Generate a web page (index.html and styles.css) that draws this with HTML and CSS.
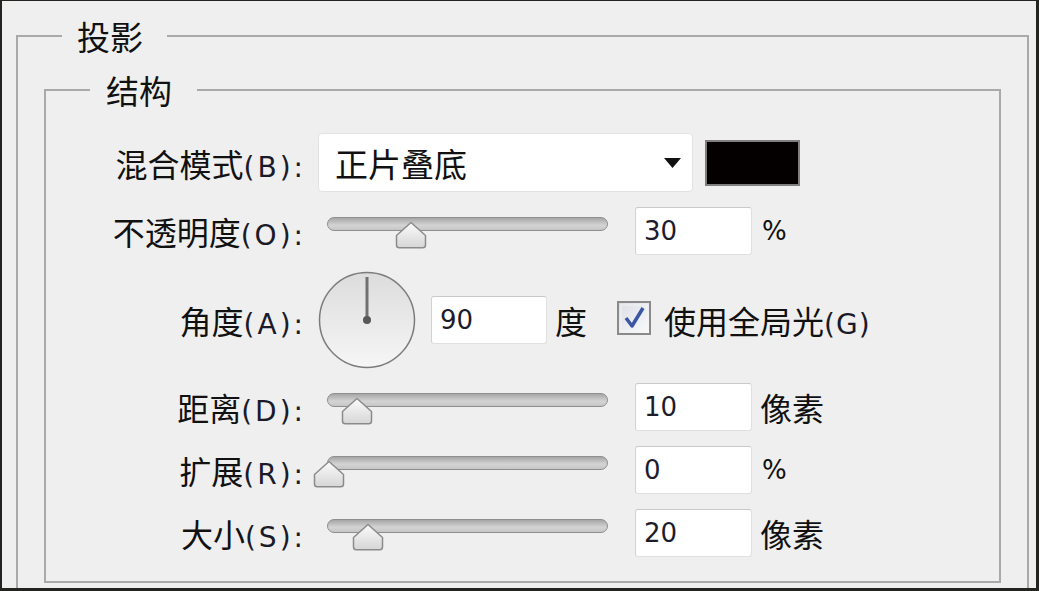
FILE: index.html
```html
<!DOCTYPE html>
<html lang="zh-CN">
<head>
    <meta charset="UTF-8">
    <meta name="viewport" content="width=device-width, initial-scale=1.0">
    <title>投影</title>
    <link rel="stylesheet" href="styles.css">
</head>
<body>
    <div class="window">
        <fieldset class="group outer">
            <legend>投影</legend>
            <fieldset class="group inner">
                <legend>结构</legend>

                <div class="row row-blend">
                    <label class="lbl">混合模式<span class="key">(B):</span></label>
                    <div class="select">
                        <span>正片叠底</span>
                        <svg class="caret" width="17" height="10" viewBox="0 0 17 10"><path d="M0 0H17L8.5 10Z" fill="#111"/></svg>
                    </div>
                    <div class="swatch"></div>
                </div>

                <div class="row">
                    <label class="lbl">不透明度<span class="key">(O):</span></label>
                    <div class="slider">
                        <div class="track"></div>
                        <svg class="thumb" style="left: 77px" width="32" height="28" viewBox="0 0 32 28"><use href="#thumb"/></svg>
                    </div>
                    <input class="num" type="text" value="30">
                    <span class="unit pct">%</span>
                </div>

                <div class="row row-angle">
                    <label class="lbl">角度<span class="key">(A):</span></label>
                    <svg class="dial" width="98" height="98" viewBox="0 0 98 98">
                        <defs>
                            <linearGradient id="dialFill" x1="0" y1="0" x2="0" y2="1">
                                <stop offset="0" stop-color="#dcdcdc"/>
                                <stop offset="1" stop-color="#f6f6f6"/>
                            </linearGradient>
                        </defs>
                        <circle cx="49" cy="49" r="47.5" fill="url(#dialFill)" stroke="#7c7c7c" stroke-width="1.5"/>
                        <line x1="49" y1="49" x2="49" y2="6" stroke="#707070" stroke-width="3"/>
                        <circle cx="49" cy="49" r="4" fill="#575757"/>
                    </svg>
                    <input class="num angle" type="text" value="90">
                    <span class="unit">度</span>
                    <svg class="check" width="34" height="34" viewBox="0 0 34 34">
                        <defs>
                            <linearGradient id="checkFill" x1="0" y1="0" x2="1" y2="1">
                                <stop offset="0" stop-color="#d9dde4"/>
                                <stop offset="1" stop-color="#fbfbfc"/>
                            </linearGradient>
                        </defs>
                        <rect x="1" y="1" width="32" height="32" fill="url(#checkFill)" stroke="#8a8a8a" stroke-width="2"/>
                        <rect x="4" y="4" width="26" height="26" fill="none" stroke="#f4f4f4" stroke-width="1"/>
                        <path d="M9 17L15 25L26 7" fill="none" stroke="#3b57a3" stroke-width="3.5" stroke-linejoin="round"/>
                    </svg>
                    <span class="check-text">使用全局光<span class="key">(G)</span></span>
                </div>

                <div class="row">
                    <label class="lbl">距离<span class="key">(D):</span></label>
                    <div class="slider">
                        <div class="track"></div>
                        <svg class="thumb" style="left: 23px" width="32" height="28" viewBox="0 0 32 28"><use href="#thumb"/></svg>
                    </div>
                    <input class="num" type="text" value="10">
                    <span class="unit">像素</span>
                </div>

                <div class="row">
                    <label class="lbl">扩展<span class="key">(R):</span></label>
                    <div class="slider">
                        <div class="track"></div>
                        <svg class="thumb" style="left: -5px" width="32" height="28" viewBox="0 0 32 28"><use href="#thumb"/></svg>
                    </div>
                    <input class="num" type="text" value="0">
                    <span class="unit pct">%</span>
                </div>

                <div class="row">
                    <label class="lbl">大小<span class="key">(S):</span></label>
                    <div class="slider">
                        <div class="track"></div>
                        <svg class="thumb" style="left: 34px" width="32" height="28" viewBox="0 0 32 28"><use href="#thumb"/></svg>
                    </div>
                    <input class="num" type="text" value="20">
                    <span class="unit">像素</span>
                </div>
            </fieldset>
        </fieldset>
    </div>

    <!-- shared slider thumb -->
    <svg width="0" height="0" class="defs">
        <defs>
            <linearGradient id="thumbFill" x1="0" y1="0" x2="0" y2="1">
                <stop offset="0" stop-color="#fbfbfb"/>
                <stop offset="1" stop-color="#d6d6d6"/>
            </linearGradient>
            <path id="thumb" d="M16 1.5L30.5 14.5V24Q30.5 26.8 27.7 26.8H4.3Q1.5 26.8 1.5 24V14.5Z" fill="url(#thumbFill)" stroke="#8b8b8b" stroke-width="1.5" stroke-linejoin="round"/>
        </defs>
    </svg>
</body>
</html>
```

FILE: styles.css
```css
body {
    margin: 0;
    font-family: "Noto Sans CJK SC", sans-serif;
    color: #111;
}
.defs {
    position: absolute;
}
.window {
    width: 1039px;
    height: 591px;
    box-sizing: border-box;
    border: 2px solid #23231f;
    border-top-width: 1px;
    border-right-width: 3px;
    border-bottom-width: 3px;
    background: #efefef;
    overflow: hidden;
}
.group {
    border: 2px solid #a9a9a9;
    margin: 0;
    padding: 0;
    min-width: 0;
}
.group > legend {
    font-size: 33px;
    line-height: 30px;
}
.outer {
    width: 1013px;
    box-sizing: border-box;
    margin: 20px 0 0 14px;
    padding: 0 26px 10px;
}
.outer > legend {
    margin-left: 18px;
    padding: 0 24px 0 15px;
}
.inner {
    margin-top: 24px;
    padding: 0 0 24px;
}
.inner > legend {
    margin-left: 44px;
    padding: 0 25px 0 16px;
}
.row {
    display: flex;
    align-items: center;
    height: 48px;
    margin-top: 15px;
}
.row-blend {
    height: 59px;
    margin-top: 28px;
}
.row-angle {
    height: 96px;
    margin-top: 17px;
}
.lbl {
    flex: none;
    width: 260px;
    margin-right: 12px;
    text-align: right;
    font-size: 32px;
    white-space: nowrap;
}
.key {
    font-family: "DejaVu Sans", sans-serif;
    font-size: 28px;
    letter-spacing: 3px;
    color: #1a1a2a;
}
.check-text .key {
    letter-spacing: 1px;
}
.select {
    flex: none;
    display: flex;
    align-items: center;
    width: 375px;
    height: 59px;
    box-sizing: border-box;
    padding: 0 11px 0 16px;
    background: #fff;
    border: 1px solid #e2e2e2;
    border-radius: 4px;
    font-size: 33px;
}
.caret {
    margin-left: auto;
}
.swatch {
    flex: none;
    width: 95px;
    height: 46px;
    box-sizing: border-box;
    margin-left: 12px;
    border: 2px solid #7f7f7f;
    background: #050000;
}
.slider {
    position: relative;
    flex: none;
    width: 290px;
    height: 48px;
}
.track {
    margin: 10px 0 0 9px;
    height: 14px;
    box-sizing: border-box;
    border: 1px solid #8e8e8e;
    border-radius: 7px;
    background: linear-gradient(#a6a6a6, #d4d4d4 60%, #c6c6c6);
}
.thumb {
    position: absolute;
    top: 14px;
}
.num {
    flex: none;
    width: 117px;
    height: 48px;
    box-sizing: border-box;
    margin: 0 0 0 27px;
    padding: 0 0 0 8px;
    border: 1px solid #e0e0e0;
    border-top-color: #c9c9c9;
    border-left-color: #d2d2d2;
    border-radius: 3px;
    background: #fff;
    font-family: "DejaVu Sans", sans-serif;
    font-size: 26px;
    color: #1c1c2a;
    outline: none;
}
.unit {
    margin-left: 8px;
    font-size: 32px;
}
.unit.pct {
    font-family: "DejaVu Sans", sans-serif;
    font-size: 26px;
    margin-left: 10px;
}
.dial {
    flex: none;
}
.num.angle {
    width: 116px;
    margin-left: 15px;
}
.check {
    flex: none;
    margin: -4px 0 0 30px;
}
.check-text {
    margin-left: 13px;
    font-size: 32px;
    white-space: nowrap;
}
```
